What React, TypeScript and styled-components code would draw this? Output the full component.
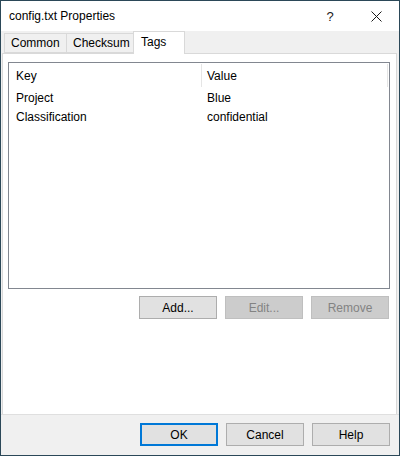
import styled, { createGlobalStyle } from "styled-components";

const GlobalStyle = createGlobalStyle`
  html, body {
    margin: 0;
    padding: 0;
    background: #ffffff;
  }
  * {
    box-sizing: border-box;
  }
`

const tags = [
  { key: "Project", value: "Blue" },
  { key: "Classification", value: "confidential" },
];

const App = () => {
  return (
    <>
      <GlobalStyle />
      <Window>
        <TitleBar>
          <Title>config.txt Properties</Title>
          <CaptionButton>?</CaptionButton>
          <CaptionButton>
            <svg width="11" height="11" viewBox="0 0 11 11">
              <path d="M0.5 0.5 L10.5 10.5 M10.5 0.5 L0.5 10.5" stroke="#1a1a1a" strokeWidth="1" fill="none" />
            </svg>
          </CaptionButton>
        </TitleBar>
        <Body>
          <TabStrip>
            <Tab $width={63}>Common</Tab>
            <Tab $width={68}>Checksum</Tab>
            <Tab $width={52} $active>Tags</Tab>
          </TabStrip>
          <TabPage>
            <ListBox>
              <HeaderRow>
                <HeaderCell $width={193}>Key</HeaderCell>
                <HeaderCell $width={186}>Value</HeaderCell>
              </HeaderRow>
              {tags.map(t => (
                <Row key={t.key}>
                  <KeyCell>{t.key}</KeyCell>
                  <ValueCell>{t.value}</ValueCell>
                </Row>
              ))}
            </ListBox>
            <ButtonRow>
              <Button>Add...</Button>
              <Button disabled>Edit...</Button>
              <Button disabled>Remove</Button>
            </ButtonRow>
          </TabPage>
        </Body>
        <Footer>
          <Button $default>OK</Button>
          <Button>Cancel</Button>
          <Button>Help</Button>
        </Footer>
      </Window>
    </>
  )
}

const Window = styled.div`
  width: 400px;
  height: 456px;
  display: flex;
  flex-direction: column;
  border: 1px solid #2b4858;
  background-color: #f0f0f0;
  font-family: "Liberation Sans", Arial, sans-serif;
  font-size: 12px;
  color: #000000;
`
const TitleBar = styled.div`
  height: 30px;
  display: flex;
  align-items: center;
  background-color: #ffffff;
  padding-left: 8px;
`
const Title = styled.span`
  flex: 1;
  font-size: 12px;
  color: #000000;
`
const CaptionButton = styled.div`
  width: 46px;
  height: 30px;
  display: flex;
  justify-content: center;
  align-items: center;
  font-size: 13px;
  color: #1a1a1a;
`
const Body = styled.div`
  display: flex;
  flex-direction: column;
  padding: 0 2px 0 1px;
`
const TabStrip = styled.div`
  height: 22px;
  display: flex;
  align-items: flex-end;
  padding-left: 2px;
`
const Tab = styled.div<{ $active?: boolean; $width: number }>`
  width: ${p => p.$width}px;
  height: ${p => (p.$active ? "23px" : "20px")};
  margin-bottom: ${p => (p.$active ? "-1px" : "0")};
  margin-left: -1px;
  padding: ${p => (p.$active ? "2px 0 0 7px" : "1px 0 0 6px")};
  border: 1px solid #d9d9d9;
  border-bottom: ${p => (p.$active ? "none" : "1px solid #d9d9d9")};
  background-color: ${p => (p.$active ? "#ffffff" : "#f0f0f0")};
  position: relative;
  z-index: ${p => (p.$active ? 1 : 0)};
  line-height: 16px;
  &:first-child {
    margin-left: 0;
  }
`
const TabPage = styled.div`
  height: 362px;
  border: 1px solid #d9d9d9;
  background-color: #ffffff;
  padding: 8px 6px 0 5px;
  display: flex;
  flex-direction: column;
`
const ListBox = styled.div`
  height: 227px;
  border: 1px solid #828790;
  background-color: #ffffff;
`
const HeaderRow = styled.div`
  height: 25px;
  display: flex;
`
const HeaderCell = styled.div<{ $width: number }>`
  width: ${p => p.$width}px;
  height: 23px;
  margin-top: 1px;
  padding: 0 0 0 7px;
  display: flex;
  align-items: center;
  border-right: 1px solid #e5e5e5;
  & + & {
    padding-left: 5px;
  }
`
const Row = styled.div`
  height: 19px;
  display: flex;
  align-items: center;
`
const KeyCell = styled.div`
  width: 193px;
  padding-left: 7px;
`
const ValueCell = styled.div`
  padding-left: 5px;
`
const ButtonRow = styled.div`
  display: flex;
  justify-content: flex-end;
  gap: 8px;
  margin-top: 7px;
  padding-right: 1px;
`
const Button = styled.button<{ $default?: boolean }>`
  width: 78px;
  height: 23px;
  padding: 0;
  font-family: "Liberation Sans", Arial, sans-serif;
  font-size: 12px;
  color: #000000;
  background-color: #e1e1e1;
  border: ${p => (p.$default ? "2px solid #0078d7" : "1px solid #adadad")};
  &:disabled {
    color: #838383;
    background-color: #cccccc;
    border-color: #bfbfbf;
  }
`
const Footer = styled.div`
  flex: 1;
  display: flex;
  justify-content: flex-end;
  align-items: flex-start;
  gap: 8px;
  padding: 8px 9px 0 0;
  border-top: 1px solid #dfdfdf;
  margin-top: -1px;
`

export default App;
